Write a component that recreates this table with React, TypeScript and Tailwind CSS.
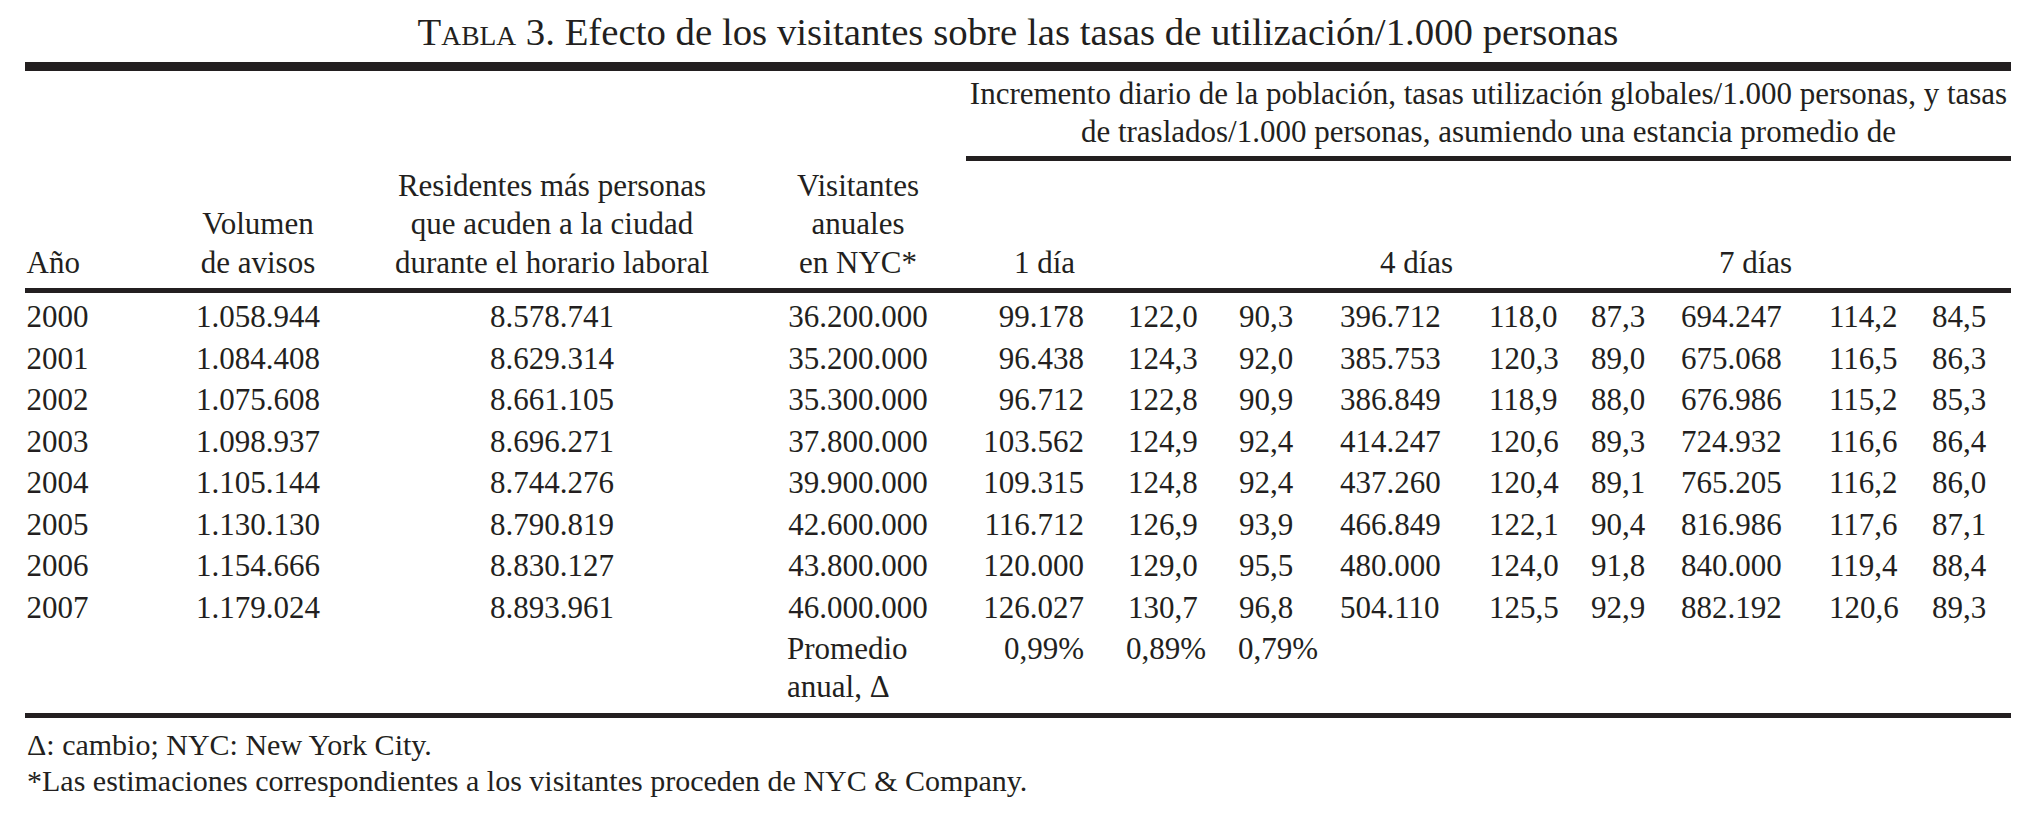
const rows = [
  ["2000", "1.058.944", "8.578.741", "36.200.000", "99.178", "122,0", "90,3", "396.712", "118,0", "87,3", "694.247", "114,2", "84,5"],
  ["2001", "1.084.408", "8.629.314", "35.200.000", "96.438", "124,3", "92,0", "385.753", "120,3", "89,0", "675.068", "116,5", "86,3"],
  ["2002", "1.075.608", "8.661.105", "35.300.000", "96.712", "122,8", "90,9", "386.849", "118,9", "88,0", "676.986", "115,2", "85,3"],
  ["2003", "1.098.937", "8.696.271", "37.800.000", "103.562", "124,9", "92,4", "414.247", "120,6", "89,3", "724.932", "116,6", "86,4"],
  ["2004", "1.105.144", "8.744.276", "39.900.000", "109.315", "124,8", "92,4", "437.260", "120,4", "89,1", "765.205", "116,2", "86,0"],
  ["2005", "1.130.130", "8.790.819", "42.600.000", "116.712", "126,9", "93,9", "466.849", "122,1", "90,4", "816.986", "117,6", "87,1"],
  ["2006", "1.154.666", "8.830.127", "43.800.000", "120.000", "129,0", "95,5", "480.000", "124,0", "91,8", "840.000", "119,4", "88,4"],
  ["2007", "1.179.024", "8.893.961", "46.000.000", "126.027", "130,7", "96,8", "504.110", "125,5", "92,9", "882.192", "120,6", "89,3"],
];

// alignment per column, tuned to the printed table
const cellCls = [
  "pl-[1.5px]",
  "text-center",
  "text-center",
  "text-center pl-[22px]",
  "text-right pr-[16px]",
  "pl-[28px]",
  "pl-[19px]",
  "pl-[20px]",
  "pl-[19px]",
  "pl-[16px]",
  "pl-[16px]",
  "pl-[19px]",
  "pl-[17px]",
];

const cols =
  "grid grid-cols-[115px_236px_352px_238px_134px_120px_100px_150px_105px_90px_145px_105px_96px]";

function Rule({ thick }: { thick?: boolean }) {
  return <div className={thick ? "h-[9px] bg-[#231f20]" : "h-[5px] bg-[#231f20]"} />;
}

export default function App() {
  return (
    <div className="w-[2036px] h-[818px] bg-white text-[#231f20] font-['Liberation_Serif',serif]">
      <h1 className="pt-[12px] text-center text-[38.8px] leading-[39px] whitespace-nowrap">
        T<span className="text-[27.5px]">ABLA</span> 3. Efecto de los visitantes sobre las tasas de utilización/1.000 personas
      </h1>

      <div className="mx-[25px] mt-[7px] text-[31px]">
        <Rule thick />

        {/* header */}
        <div className="flex h-[217px]">
          <div className="grid grid-cols-[115px_236px_352px_238px] items-end pb-[6px] leading-[38.5px]">
            <div className="pl-[1.5px]">Año</div>
            <div className="text-center">
              Volumen
              <br />
              de avisos
            </div>
            <div className="text-center whitespace-nowrap">
              Residentes más personas
              <br />
              que acuden a la ciudad
              <br />
              durante el horario laboral
            </div>
            <div className="text-center pl-[22px]">
              Visitantes
              <br />
              anuales
              <br />
              en NYC*
            </div>
          </div>
          <div className="flex flex-1 flex-col">
            <div className="pt-[3.5px] text-center leading-[38px] whitespace-nowrap">
              Incremento diario de la población, tasas utilización globales/1.000 personas, y tasas
              <br />
              de traslados/1.000 personas, asumiendo una estancia promedio de
            </div>
            <div className="mt-[5px]">
              <Rule />
            </div>
            <div className="mt-auto grid grid-cols-[134px_120px_100px_150px_105px_90px_145px_105px_96px] pb-[6px] leading-[38.5px] whitespace-nowrap">
              <div className="text-right pr-[25px]">1 día</div>
              <div />
              <div />
              <div className="pl-[60px]">4 días</div>
              <div />
              <div />
              <div className="pl-[54px]">7 días</div>
              <div />
              <div />
            </div>
          </div>
        </div>

        <Rule />

        {/* body */}
        <div className="pt-[3px] leading-[41.5px] whitespace-nowrap">
          {rows.map((r) => (
            <div key={r[0]} className={cols}>
              {r.map((v, i) => (
                <div key={i} className={cellCls[i]}>
                  {v}
                </div>
              ))}
            </div>
          ))}
          <div className={`${cols} items-start pt-[1.5px] pb-[7.5px] leading-[38px]`}>
            <div />
            <div />
            <div />
            <div className="pl-[59px]">
              Promedio
              <br />
              anual, Δ
            </div>
            <div className="text-right pr-[16px]">0,99%</div>
            <div className="pl-[26px]">0,89%</div>
            <div className="pl-[18px]">0,79%</div>
          </div>
        </div>

        <Rule />
      </div>

      <div className="mt-[9px] pl-[27px] text-[30px] leading-[36px]">
        <p>Δ: cambio; NYC: New York City.</p>
        <p>*Las estimaciones correspondientes a los visitantes proceden de NYC &amp; Company.</p>
      </div>
    </div>
  );
}
